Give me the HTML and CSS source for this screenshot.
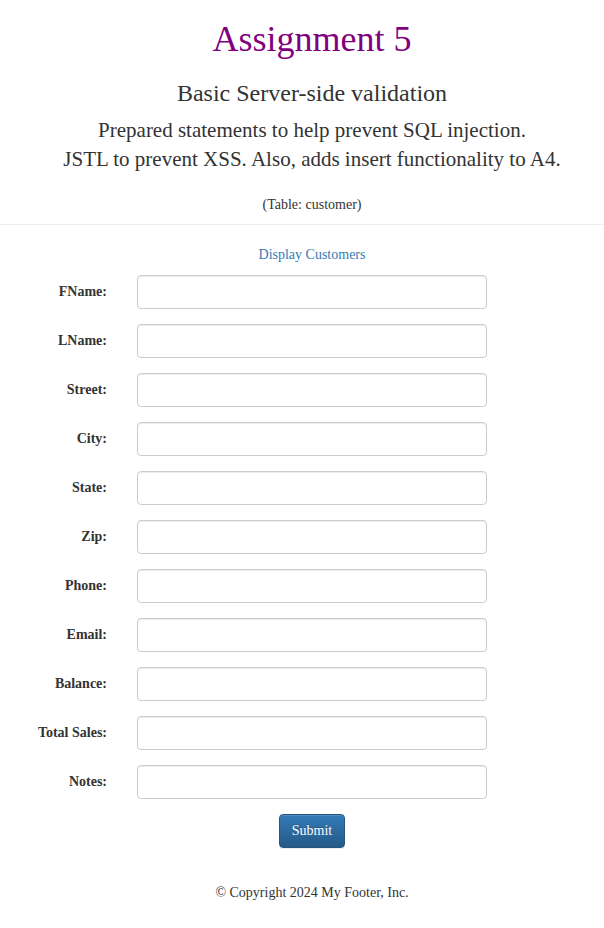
FILE: index.html
```html
<!DOCTYPE html>
<html lang="en">
<head>
<meta charset="utf-8">
<title>Assignment 5</title>
<link rel="stylesheet" href="styles.css">
</head>
<body>
<header class="page-header">
  <h1 class="title">Assignment 5</h1>
  <h3 class="subtitle">Basic Server-side validation</h3>
  <p class="lead">Prepared statements to help prevent SQL injection.<br>JSTL to prevent XSS. Also, adds insert functionality to A4.</p>
  <p class="table-note">(Table: customer)</p>
</header>
<main class="content">
  <p class="links"><a href="#" class="link">Display Customers</a></p>
  <form class="form">
    <label class="label" for="fname">FName:</label><input class="input" id="fname" type="text">
    <label class="label" for="lname">LName:</label><input class="input" id="lname" type="text">
    <label class="label" for="street">Street:</label><input class="input" id="street" type="text">
    <label class="label" for="city">City:</label><input class="input" id="city" type="text">
    <label class="label" for="state">State:</label><input class="input" id="state" type="text">
    <label class="label" for="zip">Zip:</label><input class="input" id="zip" type="text">
    <label class="label" for="phone">Phone:</label><input class="input" id="phone" type="text">
    <label class="label" for="email">Email:</label><input class="input" id="email" type="text">
    <label class="label" for="balance">Balance:</label><input class="input" id="balance" type="text">
    <label class="label" for="sales">Total Sales:</label><input class="input" id="sales" type="text">
    <label class="label" for="notes">Notes:</label><input class="input" id="notes" type="text">
    <button class="btn" type="submit">Submit</button>
  </form>
  <footer class="footer">© Copyright 2024 My Footer, Inc.</footer>
</main>
</body>
</html>
```

FILE: styles.css
```css
* { box-sizing: border-box; }
html, body { margin: 0; padding: 0; }
body {
  font-family: "Liberation Serif", "Times New Roman", serif;
  font-size: 14px;
  line-height: 20px;
  color: #333;
  background: #fff;
}
.page-header {
  text-align: center;
  padding: 20px 0 9px 20px;
  border-bottom: 1px solid #eee;
}
.title {
  margin: 0;
  font-size: 36px;
  line-height: 39.6px;
  font-weight: 400;
  color: #800080;
}
.subtitle {
  margin: 20px 0 10px;
  font-size: 24px;
  line-height: 26.4px;
  font-weight: 400;
  color: #333;
}
.lead {
  margin: 0 0 20px;
  font-size: 21px;
  line-height: 29.4px;
  font-weight: 300;
}
.table-note { margin: 0; }
.content { padding: 0 0 0 20px; }
.links {
  margin: 20px 0 10px;
  text-align: center;
}
.link { color: #337ab7; text-decoration: none; }
.form {
  display: grid;
  grid-template-columns: 87px 350px;
  column-gap: 30px;
  row-gap: 15px;
  align-items: center;
}
.label {
  justify-self: end;
  font-weight: 700;
  white-space: nowrap;
}
.input {
  display: block;
  width: 350px;
  height: 34px;
  padding: 6px 12px;
  font: inherit;
  color: #555;
  background: #fff;
  border: 1px solid #ccc;
  border-radius: 4px;
  box-shadow: inset 0 1px 1px rgba(0,0,0,.075);
}
.btn {
  grid-column: 2;
  justify-self: center;
  height: 34px;
  padding: 6px 12px;
  font: inherit;
  color: #fff;
  background: linear-gradient(to bottom, #337ab7 0, #265a88 100%);
  border: 1px solid #245580;
  border-radius: 4px;
  text-shadow: 0 -1px 0 rgba(0,0,0,.2);
  box-shadow: inset 0 1px 0 rgba(255,255,255,.15), 0 1px 1px rgba(0,0,0,.075);
}
.footer {
  text-align: center;
  margin-top: 35px;
  padding-bottom: 20px;
}
```
